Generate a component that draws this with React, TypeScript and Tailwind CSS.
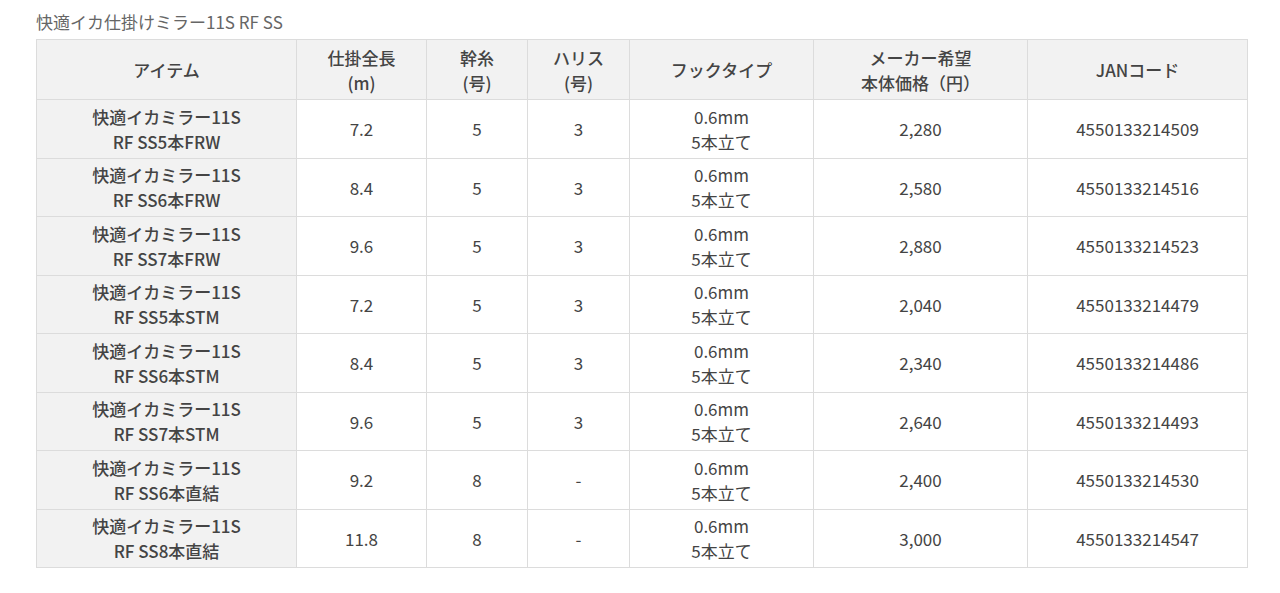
import React from 'react';

type Row = {
    name: string;
    sub: string;
    length: string;
    main: string;
    harisu: string;
    price: string;
    jan: string;
};

const rows: Row[] = [
    { name: '快適イカミラー11S', sub: 'RF SS5本FRW', length: '7.2', main: '5', harisu: '3', price: '2,280', jan: '4550133214509' },
    { name: '快適イカミラー11S', sub: 'RF SS6本FRW', length: '8.4', main: '5', harisu: '3', price: '2,580', jan: '4550133214516' },
    { name: '快適イカミラー11S', sub: 'RF SS7本FRW', length: '9.6', main: '5', harisu: '3', price: '2,880', jan: '4550133214523' },
    { name: '快適イカミラー11S', sub: 'RF SS5本STM', length: '7.2', main: '5', harisu: '3', price: '2,040', jan: '4550133214479' },
    { name: '快適イカミラー11S', sub: 'RF SS6本STM', length: '8.4', main: '5', harisu: '3', price: '2,340', jan: '4550133214486' },
    { name: '快適イカミラー11S', sub: 'RF SS7本STM', length: '9.6', main: '5', harisu: '3', price: '2,640', jan: '4550133214493' },
    { name: '快適イカミラー11S', sub: 'RF SS6本直結', length: '9.2', main: '8', harisu: '-', price: '2,400', jan: '4550133214530' },
    { name: '快適イカミラー11S', sub: 'RF SS8本直結', length: '11.8', main: '8', harisu: '-', price: '3,000', jan: '4550133214547' },
];

const th = 'border border-[#dcdcdc] bg-[#f2f2f2] font-medium text-center align-middle leading-[25px] p-0';
const td = 'border border-[#dcdcdc] bg-white text-center align-middle leading-[25px] p-0';

export default function App() {
    return (
        <div
            className="w-[1280px] h-[593px] bg-white pl-[36px] pt-[9px] text-[#444]"
            style={{ fontFamily: '"Noto Sans CJK JP", "Noto Sans", sans-serif' }}
        >
            {/* Title */}
            <div className="text-[17px] leading-[26px] text-[#666] h-[30px]">快適イカ仕掛けミラー11S RF SS</div>

            <table className="border-collapse table-fixed w-[1211px] text-[17px]">
                <colgroup>
                    <col className="w-[260px]" />
                    <col className="w-[130px]" />
                    <col className="w-[101px]" />
                    <col className="w-[102px]" />
                    <col className="w-[184px]" />
                    <col className="w-[214px]" />
                    <col className="w-[220px]" />
                </colgroup>
                <thead>
                    <tr className="h-[60px]">
                        <th className={th}>アイテム</th>
                        <th className={th}>仕掛全長<br />(m)</th>
                        <th className={th}>幹糸<br />(号)</th>
                        <th className={th}>ハリス<br />(号)</th>
                        <th className={th}>フックタイプ</th>
                        <th className={th}>メーカー希望<br />本体価格（円）</th>
                        <th className={th}>JANコード</th>
                    </tr>
                </thead>
                <tbody>
                    {rows.map((r, i) => (
                        <tr key={i} className="h-[58.5px]">
                            <td className={th}>{r.name}<br />{r.sub}</td>
                            <td className={td}>{r.length}</td>
                            <td className={td}>{r.main}</td>
                            <td className={td}>{r.harisu}</td>
                            <td className={td}>0.6mm<br />5本立て</td>
                            <td className={td}>{r.price}</td>
                            <td className={td}>{r.jan}</td>
                        </tr>
                    ))}
                </tbody>
            </table>
        </div>
    );
}
